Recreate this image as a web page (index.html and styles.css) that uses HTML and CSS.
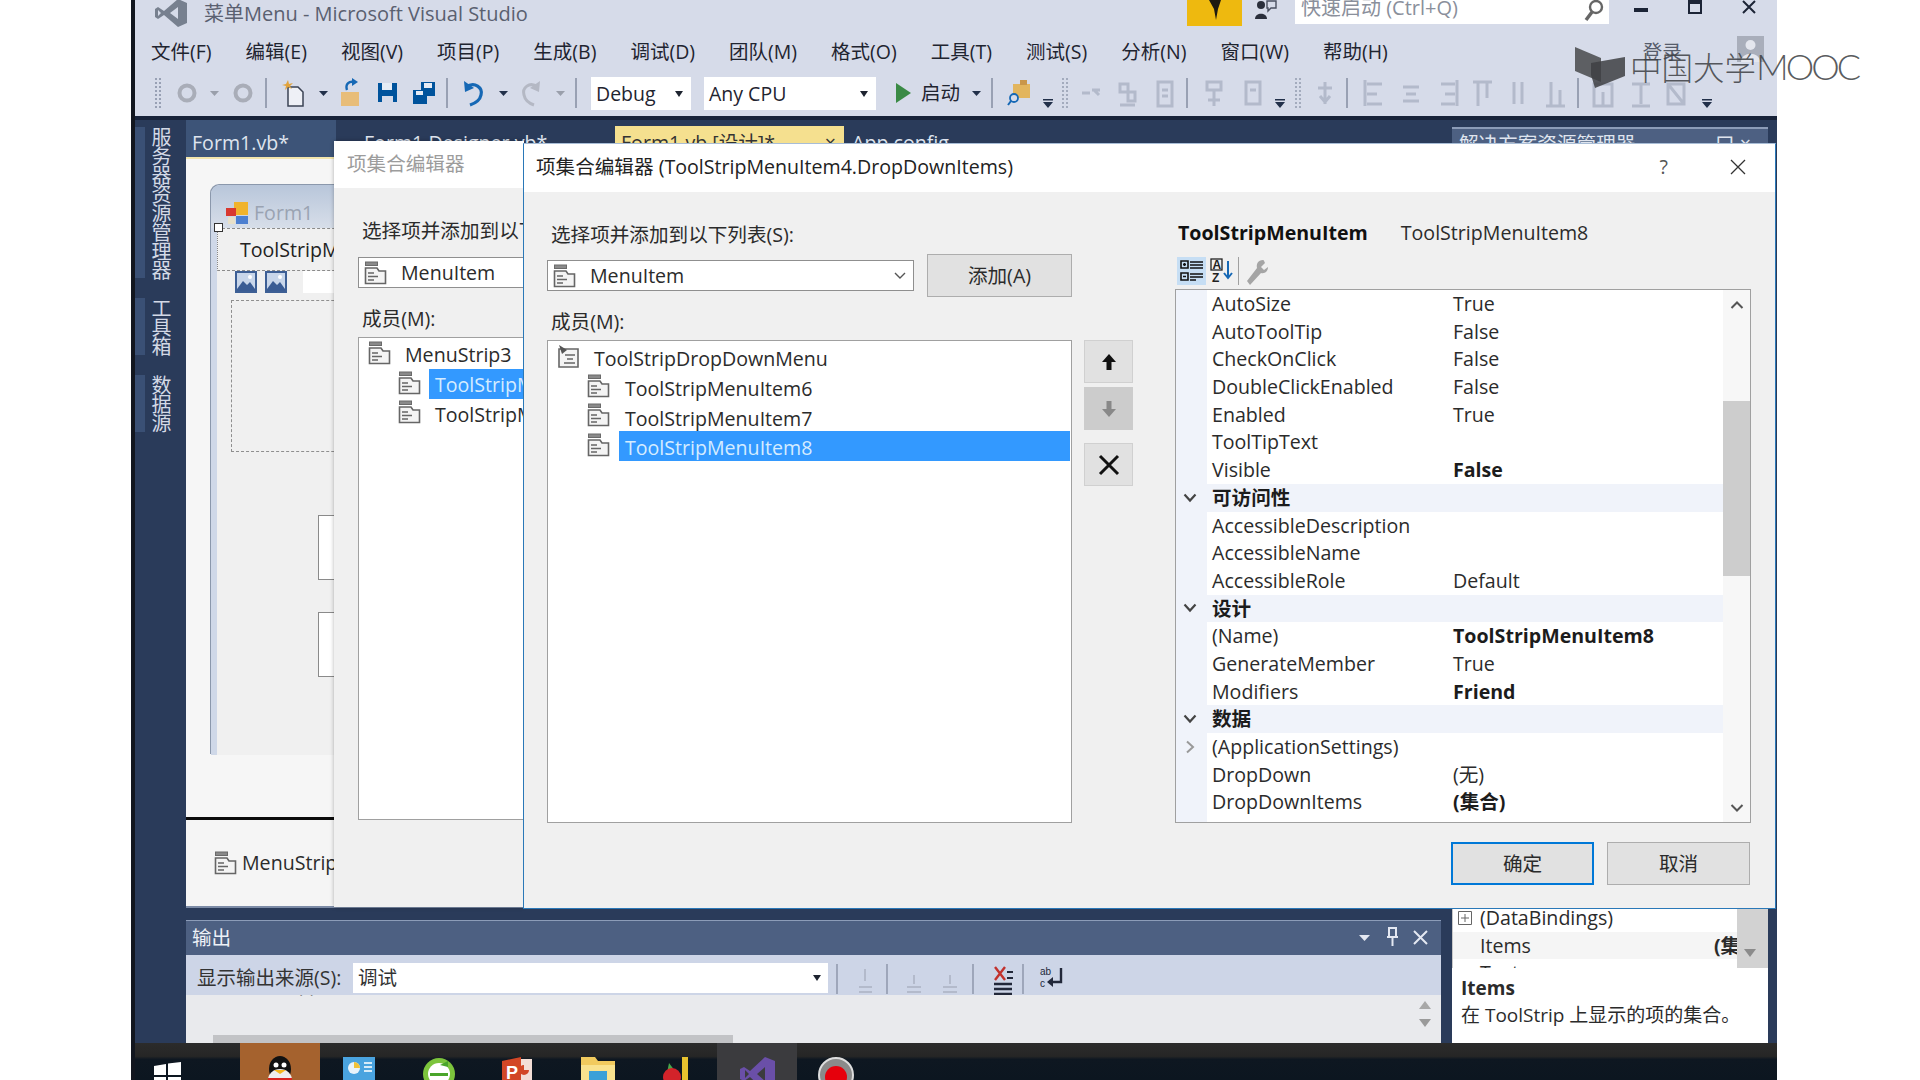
FILE: index.html
```html
<!DOCTYPE html>
<html lang="zh-CN">
<head>
<meta charset="utf-8">
<title>菜单Menu - Microsoft Visual Studio</title>
<link rel="stylesheet" href="styles.css">
</head>
<body>
<svg class="defs" width="0" height="0">
  <symbol id="comp" viewBox="0 0 23 24">
    <rect x="1.5" y="1" width="12" height="3.5" fill="#8a8a8a" stroke="#6a6a6a"/>
    <path d="M1.5 7H13l2 3h6.5v12.5h-20z" fill="#f4f4f4" stroke="#666" stroke-width="1.6"/>
    <path d="M4 12h6M4 15.5h10M4 19h6" stroke="#666" stroke-width="1.5"/>
  </symbol>
  <symbol id="compdrop" viewBox="0 0 23 24">
    <path d="M2 5h19v18H2z" fill="#f4f4f4" stroke="#666" stroke-width="1.6"/>
    <path d="M2 1l8 5-5 4z" fill="#555"/>
    <path d="M8 11h10M10 15h6M7 19h11" stroke="#666" stroke-width="1.5"/>
  </symbol>
  <symbol id="pic" viewBox="0 0 22 22">
    <rect width="22" height="22" fill="#3d5f95"/>
    <rect x="2" y="2" width="18" height="18" fill="#c8d6ea"/>
    <path d="M2 18l6-8 4 4 3-3 5 7v2H2z" fill="#3a5c94"/>
    <circle cx="15" cy="6" r="2" fill="#fff"/>
  </symbol>
</svg>
<div class="shell">
  <header class="titlebar">
    <svg class="vslogo" width="36" height="28" viewBox="0 0 36 28"><path d="M25 0l9 4v20l-9 4-14-12-6 4-3-2V10l3-2 6 4zM25 8l-8 6 8 6zM5 11v6l3-3z" fill="#77808f"/></svg>
    <span class="apptitle">菜单Menu - Microsoft Visual Studio</span>
    <span class="flag"><svg width="20" height="26" viewBox="0 0 20 26"><path d="M4 0h12l-3 9-2 11-2-11z" fill="#1e1a10"/></svg></span>
    <svg class="feedback" width="24" height="20" viewBox="0 0 24 20"><circle cx="7" cy="5" r="4" fill="#2a2f3c"/><path d="M1 19c0-7 12-7 12 0z" fill="#2a2f3c"/><path d="M13 1h9v7h-5l-3 3V8h-1z" fill="none" stroke="#4a5060" stroke-width="1.4"/></svg>
    <div class="quick">
      <span>快速启动 (Ctrl+Q)</span>
      <svg width="20" height="22" viewBox="0 0 20 22"><circle cx="12" cy="7" r="6" fill="none" stroke="#666" stroke-width="2.4"/><path d="M8 12l-6 8" stroke="#666" stroke-width="3.4"/></svg>
    </div>
    <div class="winbtns">
      <svg width="14" height="14" viewBox="0 0 14 14"><rect y="8" width="14" height="4" fill="#1c2436"/></svg>
      <svg width="14" height="16" viewBox="0 0 14 16"><rect x="1" y="0" width="12" height="13" fill="none" stroke="#1c2436" stroke-width="2"/><rect x="1" y="0" width="12" height="4" fill="#1c2436"/></svg>
      <svg width="14" height="14" viewBox="0 0 14 14"><path d="M1 1l12 12M13 1L1 13" stroke="#1c2436" stroke-width="2"/></svg>
    </div>
  </header>

  <nav class="menubar">
    <span>文件(F)</span><span>编辑(E)</span><span>视图(V)</span><span>项目(P)</span><span>生成(B)</span><span>调试(D)</span><span>团队(M)</span><span>格式(O)</span><span>工具(T)</span><span>测试(S)</span><span>分析(N)</span><span>窗口(W)</span><span>帮助(H)</span>
    <span class="login">登录</span>
    <svg class="userpic" width="27" height="26" viewBox="0 0 27 26"><rect width="27" height="26" fill="#a9aebb"/><circle cx="13.5" cy="9" r="5" fill="#e4e6ee"/><path d="M4 26c0-11 19-11 19 0z" fill="#e4e6ee"/></svg>
  </nav>

  <div class="toolbar">
    <svg class="tb-left" width="436" height="36" viewBox="150 75 436 36">
      <path d="M156 78v30M160 78v30" stroke="#98a0b4" stroke-width="2" stroke-dasharray="2 2"/>
      <circle cx="187" cy="93" r="7.5" fill="none" stroke="#a9adb8" stroke-width="4"/>
      <path d="M210 91h9l-4.500 5z" fill="#9a9fab"/>
      <circle cx="243" cy="93" r="7.500" fill="none" stroke="#a9adb8" stroke-width="4"/>
      <path d="M266 78v30M447 78v30M576 78v30" stroke="#7f889c" stroke-width="1.400"/>
      <path d="M288 87h10l5 5v14h-15z" fill="#eef0f6" stroke="#3b4354" stroke-width="1.500"/>
      <path d="M286 84l2-4 1 4 4-1-3 3 2 3-4-2-3 3 1-4-4-1z" fill="#e2a33b"/>
      <path d="M319 91h9l-4.500 5z" fill="#22304a"/>
      <path d="M341 92h18v14h-18z" fill="#e8bd79"/>
      <path d="M347 90c-2-6 2-9 7-8" fill="none" stroke="#1668b5" stroke-width="2.400"/>
      <path d="M352 78l6 4-6 4z" fill="#1668b5"/>
      <path d="M378 83h19v19h-19z" fill="#00539c"/>
      <path d="M382 83h10v7h-10z" fill="#e6ecf5"/>
      <path d="M382 96h11v6h-11z" fill="#d6dbe9"/>
      <path d="M413 90h14v14h-14z" fill="#00539c"/>
      <path d="M421 82h14v14h-8v-6h-6z" fill="#00539c"/>
      <path d="M424 83h8v5h-8zM416 91h7v4h-7z" fill="#e6ecf5"/>
      <path d="M466 87c9-6 17 1 15 8-1 5-5 8-11 10" fill="none" stroke="#1668b5" stroke-width="3.200"/>
      <path d="M464 81l1 11 9-4z" fill="#1668b5"/>
      <path d="M499 91h9l-4.500 5z" fill="#22304a"/>
      <path d="M538 87c-9-6-16 1-14 8 1 5 4 8 10 10" fill="none" stroke="#b4b8c4" stroke-width="3"/>
      <path d="M540 81l-1 11-9-4z" fill="#b4b8c4"/>
      <path d="M556 91h9l-4.500 5z" fill="#9a9fab"/>
    </svg>
    <div class="tcombo debug"><span>Debug</span><i></i></div>
    <div class="tcombo anycpu"><span>Any CPU</span><i></i></div>
    <svg class="play" width="15" height="20" viewBox="0 0 15 20"><path d="M0 0l15 10L0 20z" fill="#3a8a45"/></svg>
    <span class="start">启动</span>
    <svg class="tb-right" width="748" height="42" viewBox="970 72 748 42">
      <path d="M972 91h9l-4.500 5z" fill="#22304a"/>
      <path d="M992 78v30M1187 78v30M1347 78v30M1578 78v30" stroke="#7f889c" stroke-width="1.400"/>
      <path d="M1013 84h17v14h-17z" fill="#e2b55e"/><path d="M1020 80h7v5h-7z" fill="#c9964a"/>
      <circle cx="1014" cy="98" r="4" fill="#d6dbe9" stroke="#1668b5" stroke-width="1.800"/><path d="M1011 101l-3 4" stroke="#1668b5" stroke-width="2"/>
      <g class="ovf" fill="#22304a">
        <path d="M1043 99h10v1.500h-10zM1043 102h10l-5 6z"/>
        <path d="M1275 99h10v1.500h-10zM1275 102h10l-5 6z"/>
        <path d="M1702 99h10v1.500h-10zM1702 102h10l-5 6z"/>
      </g>
      <path d="M1063 78v30M1067 78v30M1296 78v30M1300 78v30" stroke="#a3abbd" stroke-width="2" stroke-dasharray="2 2"/>
      <g fill="none" stroke="#b3bacb" stroke-width="3">
        <path d="M1082 93h8M1092 90h8M1094 90l5 5"/>
        <path d="M1120 84h8v8h-8zM1128 92h7v9h-7zM1120 105h15"/>
        <path d="M1158 82h14v24h-14zM1162 90h6M1162 96h6"/>
        <path d="M1207 82h14v8h-14zM1214 90v16M1208 100h12"/>
        <path d="M1246 82h14v22h-14zM1250 90h6"/>
        <path d="M1318 88h14M1325 82v22M1320 96l5 6 5-6"/>
        <path d="M1367 84h15M1367 94h10M1367 104h15M1365 80v26"/>
        <path d="M1403 87h16M1406 94h10M1403 101h16"/>
        <path d="M1441 84h14M1445 94h10M1441 104h14M1457 80v26"/>
        <path d="M1473 82h19M1478 82v24M1487 82v16"/>
        <path d="M1514 82v22M1522 82v22"/>
        <path d="M1546 106h19M1551 82v24M1560 90v16"/>
        <path d="M1594 84h18v22h-18zM1603 92v14"/>
        <path d="M1632 84h18M1641 84v20M1632 106h18"/>
        <path d="M1668 84h16v20h-16zM1668 84l16 20"/>
      </g>
    </svg>
  </div>

  <main class="workspace">
    <aside class="sidebar">
      <div class="vtab tall"><i></i><span>服务器资源管理器</span></div>
      <div class="vtab"><i></i><span>工具箱</span></div>
      <div class="vtab"><i></i><span>数据源</span></div>
    </aside>

    <section class="centre">
      <div class="doctabs">
        <span class="dtab active">Form1.vb*</span>
        <span class="dtab plain">Form1.Designer.vb*</span>
        <span class="dtab yellow"><span>Form1.vb [设计]*</span><em>×</em></span>
        <span class="dtab plain">App.config</span>
      </div>
      <div class="designer">
        <div class="form">
          <div class="formtitle">
            <svg width="22" height="22" viewBox="0 0 22 22"><rect x="8" y="0" width="14" height="13" fill="#f0b32c"/><rect x="0" y="6" width="10" height="8" fill="#d8382f"/><rect x="2" y="15" width="7" height="7" fill="#e8e0c8"/><rect x="10" y="14" width="12" height="8" fill="#4c7fd0"/></svg>
            <span>Form1</span>
            <i class="handle"></i>
          </div>
          <div class="menustrip">ToolStripMenuItem4</div>
          <div class="picrow">
            <svg width="22" height="22"><use href="#pic"/></svg>
            <svg width="22" height="22"><use href="#pic"/></svg>
            <b></b>
          </div>
          <div class="formpanel"></div>
          <i class="formbtn one"></i>
          <i class="formbtn two"></i>
        </div>
      </div>
      <div class="tray">
        <svg width="23" height="24"><use href="#comp"/></svg>
        <span>MenuStrip3</span>
      </div>
      <div class="output">
        <div class="outhead">
          <span>输出</span>
          <svg width="78" height="24" viewBox="0 0 78 24">
            <path d="M0 9h11l-5.500 6z" fill="#e4e8f2"/>
            <path d="M30 2h7v9h-7zM28 11h11M33.500 11v9" fill="none" stroke="#e4e8f2" stroke-width="2"/>
            <path d="M55 5l13 13M68 5L55 18" stroke="#e4e8f2" stroke-width="2"/>
          </svg>
        </div>
        <div class="outbar">
          <label>显示输出来源(S):</label>
          <div class="outcombo"><span>调试</span><i></i></div>
          <svg width="236" height="34" viewBox="832 963 236 34">
            <path d="M838 965v30M888 965v30M974 965v30M1024 965v30" stroke="#8b93a8" stroke-width="1.400"/>
            <path d="M860 988h13M866 970v12M860 993h13M915 976v9M908 988h14M908 993h14M951 976v9M944 988h14M944 993h14" stroke="#b3bacb" stroke-width="2" fill="none"/>
            <path d="M995 985h18M995 990h18M995 995h18" stroke="#22283a" stroke-width="2.400"/>
            <path d="M996 968l10 13M1006 968l-10 13" stroke="#c2322d" stroke-width="2.400"/>
            <path d="M1008 973h6M1008 979h6" stroke="#22283a" stroke-width="2"/>
            <path d="M1062 969v14h-11" fill="none" stroke="#22283a" stroke-width="2.400"/><path d="M1054 978l-6 5 6 5z" fill="#22283a"/>
            <text x="1041" y="976" class="abc">ab</text><text x="1041" y="988" class="abc">c</text>
          </svg>
        </div>
        <div class="outbody">
          <p>“WindowsApplication1.vshost.exe”(CLR v4.0.30319: 已加载“调试”)</p>
          <div class="hscroll"><i></i></div>
          <i class="sarrow up"></i><i class="sarrow down"></i>
        </div>
      </div>
    </section>

    <aside class="rightcol">
      <div class="solution">
        <div class="solhead">
          <span>解决方案资源管理器</span>
          <em>- 口 ×</em>
        </div>
      </div>
      <div class="props">
        <div class="propmini">
          <div class="miniinner">
            <div class="mrow"><svg width="14" height="14" viewBox="0 0 14 14"><path d="M.5.500h13v13H.5zM3 7h8M7 3v8" fill="none" stroke="#666"/></svg><span>(DataBindings)</span></div>
            <div class="mrow tint"><span>Items</span><b>(集合)</b></div>
            <div class="mrow"><span>Text</span></div>
          </div>
          <div class="minitrack"><svg width="12" height="8" viewBox="0 0 12 8"><path d="M0 0h12L6 8z" fill="#8b8b8b"/></svg></div>
        </div>
        <div class="help">
          <b>Items</b>
          <p>在 ToolStrip 上显示的项的集合。</p>
        </div>
      </div>
    </aside>
  </main>

  <footer class="taskbar">
    <div class="startbtn"><svg width="27" height="27" viewBox="0 0 27 27"><path d="M0 4l12-2v11H0zM14 1.500L27 0v13H14zM0 15h12v11L0 24zM14 15h13v12l-13-2z" fill="#fff"/></svg></div>
    <div class="tile qq"><svg width="30" height="34" viewBox="0 0 30 34"><ellipse cx="15" cy="13" rx="11" ry="13" fill="#111"/><ellipse cx="15" cy="24" rx="12" ry="11" fill="#eee"/><path d="M3 22h24v6H3z" fill="#d8241f"/><circle cx="11" cy="9" r="2.500" fill="#fff"/><circle cx="19" cy="9" r="2.500" fill="#fff"/><path d="M9 14h12l-6 4z" fill="#f5b71e"/></svg></div>
    <div class="tile"><svg width="32" height="26" viewBox="0 0 32 26"><rect width="32" height="26" fill="#4aa3df"/><circle cx="11" cy="11" r="6" fill="#e9f3fb"/><path d="M11 11V5a6 6 0 0 1 6 6z" fill="#f0c23a"/><path d="M21 6h8M21 10h8M21 14h8" stroke="#d7ebf8" stroke-width="2"/></svg></div>
    <div class="tile"><svg width="34" height="34" viewBox="0 0 34 34"><circle cx="17" cy="17" r="16" fill="#7cc43c"/><circle cx="17" cy="17" r="11" fill="#fff"/><path d="M8 16h18v3H8zM26 4l-8 4 8 2z" fill="#4aa52a"/></svg></div>
    <div class="tile"><svg width="32" height="30" viewBox="0 0 32 30"><path d="M14 2h16v26H14z" fill="#f3ded6"/><path d="M0 4l19-4v30L0 28z" fill="#d24726"/><text x="4" y="22" class="ppt">P</text><path d="M22 8a5 5 0 1 0 5 5h-5z" fill="#d24726"/></svg></div>
    <div class="tile"><svg width="34" height="30" viewBox="0 0 34 30"><path d="M0 0h14l3 4h17v26H0z" fill="#f1ca5e"/><rect x="0" y="8" width="34" height="22" fill="#f9e28e"/><rect x="8" y="14" width="18" height="12" fill="#3aa0d8"/></svg></div>
    <div class="tile"><svg width="36" height="34" viewBox="0 0 36 34"><path d="M23 0h6v24h-6z" fill="#e8c22e"/><path d="M10 6l6 8-8 2z" fill="#49a64a"/><circle cx="13" cy="20" r="9" fill="#d3232a"/><rect x="0" y="26" width="36" height="8" fill="#7a93c9"/></svg></div>
    <div class="tile vs"><svg width="36" height="34" viewBox="0 0 36 34"><path d="M26 0l10 4v26l-10 4-15-14-6 4-4-2V12l4-2 6 4zM26 10l-8 7 8 7zM6 13v8l4-4z" fill="#6a4fa8"/></svg></div>
    <div class="tile"><svg width="36" height="36" viewBox="0 0 36 36"><circle cx="18" cy="18" r="17" fill="#8a8a8a" stroke="#ddd" stroke-width="2"/><circle cx="18" cy="20" r="11" fill="#e6000c"/></svg></div>
  </footer>
</div>

<div class="watermark">
  <svg width="52" height="42" viewBox="0 0 52 42"><path d="M0 0l26 11v24L0 24z" fill="#5d5f63"/><path d="M16 16l34-6v19L20 41l-4-13z" fill="#3e4043" opacity=".85"/></svg>
  <span>中国大学<em>MOOC</em></span>
</div>

<section class="dialog back">
  <div class="dtitle faded">项集合编辑器</div>
  <div class="backbody">
    <div class="lbl first">选择项并添加到以下列表(S):</div>
    <div class="combo wide"><svg width="23" height="24"><use href="#comp"/></svg><span>MenuItem</span></div>
    <div class="lbl second">成员(M):</div>
    <div class="list backlist">
      <div class="item root"><svg width="23" height="24"><use href="#comp"/></svg><span>MenuStrip3</span></div>
      <div class="item child"><svg width="23" height="24"><use href="#comp"/></svg><span class="sel">ToolStripMenuItem4</span></div>
      <div class="item child"><svg width="23" height="24"><use href="#comp"/></svg><span>ToolStripMenuItem5</span></div>
    </div>
  </div>
</section>

<section class="dialog front">
  <div class="dtitle">
    <span>项集合编辑器 (ToolStripMenuItem4.DropDownItems)</span>
    <span class="help-q">?</span>
    <svg class="dclose" width="16" height="16" viewBox="0 0 16 16"><path d="M1 1l14 14M15 1L1 15" stroke="#333" stroke-width="1.300"/></svg>
  </div>
  <div class="dcols">
    <div class="dleft">
      <div class="lbl first">选择项并添加到以下列表(S):</div>
      <div class="addrow">
        <div class="combo"><svg width="23" height="24"><use href="#comp"/></svg><span>MenuItem</span><svg class="chev" width="12" height="8" viewBox="0 0 12 8"><path d="M1 1l5 5 5-5" fill="none" stroke="#555" stroke-width="1.400"/></svg></div>
        <button class="btn add">添加(A)</button>
      </div>
      <div class="lbl second">成员(M):</div>
      <div class="list">
        <div class="item root"><svg width="23" height="24"><use href="#compdrop"/></svg><span>ToolStripDropDownMenu</span></div>
        <div class="item child"><svg width="23" height="24"><use href="#comp"/></svg><span>ToolStripMenuItem6</span></div>
        <div class="item child"><svg width="23" height="24"><use href="#comp"/></svg><span>ToolStripMenuItem7</span></div>
        <div class="item child current"><svg width="23" height="24"><use href="#comp"/></svg><span class="sel grow">ToolStripMenuItem8</span></div>
      </div>
    </div>
    <div class="dmove">
      <button class="mv"><svg width="14" height="16" viewBox="0 0 14 16"><path d="M7 0l7 8H9.500v8h-5V8H0z" fill="#111"/></svg></button>
      <button class="mv off"><svg width="14" height="16" viewBox="0 0 14 16"><path d="M7 16L0 8h4.500V0h5v8H14z" fill="#888"/></svg></button>
      <button class="mv del"><svg width="22" height="22" viewBox="0 0 22 22"><path d="M2 2l18 18M20 2L2 20" stroke="#111" stroke-width="3"/></svg></button>
    </div>
    <div class="dright">
      <div class="phead"><b>ToolStripMenuItem</b><span>ToolStripMenuItem8</span></div>
      <div class="ptools">
        <span class="ptool on"><svg width="24" height="24" viewBox="0 0 24 24"><path d="M1 2h7v7H1zM1 14h7v7H1z" fill="none" stroke="#111" stroke-width="1.600"/><path d="M3 5.500h3M3 17.500h3M4.500 4v3M10 3h13M10 6h13M10 9h13M10 15h13M10 18h13M10 21h6" stroke="#111" stroke-width="1.600"/></svg></span>
        <span class="ptool az-tool"><svg width="24" height="26" viewBox="0 0 24 26"><rect x="1" y="1" width="11" height="11" fill="none" stroke="#222" stroke-width="1.300"/><text x="2.500" y="10.500" class="az">A</text><text x="2" y="24" class="az">Z</text><path d="M18 3v16M14 15l4 5 4-5" fill="none" stroke="#1668b5" stroke-width="2"/></svg></span>
        <i class="psep"></i>
        <span class="ptool"><svg width="24" height="28" viewBox="0 0 24 28"><path d="M18 1c-5 0-7 4-6 8L2 22l3 4 11-12c4 1 7-2 7-6l-4 3-3-3 4-4c-1-2-1-3-2-3z" fill="#a5a5a5"/></svg></span>
      </div>
      <div class="pgrid">
        <div class="prows">
          <div class="prow"><s></s><span>AutoSize</span><span>True</span></div>
          <div class="prow"><s></s><span>AutoToolTip</span><span>False</span></div>
          <div class="prow"><s></s><span>CheckOnClick</span><span>False</span></div>
          <div class="prow"><s></s><span>DoubleClickEnabled</span><span>False</span></div>
          <div class="prow"><s></s><span>Enabled</span><span>True</span></div>
          <div class="prow"><s></s><span>ToolTipText</span><span></span></div>
          <div class="prow"><s></s><span>Visible</span><b>False</b></div>
          <div class="prow cat"><s><svg width="14" height="10" viewBox="0 0 14 10"><path d="M1.500 1.500L7 7.500l5.500-6" fill="none" stroke="#444" stroke-width="2.200"/></svg></s><b>可访问性</b><span></span></div>
          <div class="prow"><s></s><span>AccessibleDescription</span><span></span></div>
          <div class="prow"><s></s><span>AccessibleName</span><span></span></div>
          <div class="prow"><s></s><span>AccessibleRole</span><span>Default</span></div>
          <div class="prow cat"><s><svg width="14" height="10" viewBox="0 0 14 10"><path d="M1.500 1.500L7 7.500l5.500-6" fill="none" stroke="#444" stroke-width="2.200"/></svg></s><b>设计</b><span></span></div>
          <div class="prow"><s></s><span>(Name)</span><b>ToolStripMenuItem8</b></div>
          <div class="prow"><s></s><span>GenerateMember</span><span>True</span></div>
          <div class="prow"><s></s><span>Modifiers</span><b>Friend</b></div>
          <div class="prow cat"><s><svg width="14" height="10" viewBox="0 0 14 10"><path d="M1.500 1.500L7 7.500l5.500-6" fill="none" stroke="#444" stroke-width="2.200"/></svg></s><b>数据</b><span></span></div>
          <div class="prow"><s><svg width="10" height="14" viewBox="0 0 10 14"><path d="M2 1.500L8 7l-6 5.500" fill="none" stroke="#999" stroke-width="2"/></svg></s><span>(ApplicationSettings)</span><span></span></div>
          <div class="prow"><s></s><span>DropDown</span><span>(无)</span></div>
          <div class="prow"><s></s><span>DropDownItems</span><b>(集合)</b></div>
          <div class="prow"><s></s><span>Text</span><span></span></div>
        </div>
        <div class="ptrack">
          <svg width="14" height="10" viewBox="0 0 14 10"><path d="M1.500 8L7 2.500 12.500 8" fill="none" stroke="#555" stroke-width="2"/></svg>
          <i class="thumb"></i>
          <svg class="tdown" width="14" height="10" viewBox="0 0 14 10"><path d="M1.500 2L7 7.500 12.500 2" fill="none" stroke="#555" stroke-width="2"/></svg>
        </div>
      </div>
    </div>
  </div>
  <div class="dfoot">
    <button class="btn ok">确定</button>
    <button class="btn">取消</button>
  </div>
</section>
</body>
</html>
```

FILE: styles.css
```css
* { box-sizing: border-box; }
html, body { margin: 0; padding: 0; height: 1080px; overflow: hidden; background: #fff; }
body {
  position: relative;
  width: 1920px;
  font-family: "Open Sans", "Noto Sans CJK SC", sans-serif;
  font-size: 19.6px;
  line-height: 24px;
  color: #2b2b2b;
}
svg { display: block; flex: none; }
i, s, em { font-style: normal; text-decoration: none; }
p { margin: 0; }
button { font: inherit; color: inherit; padding: 0; }
.defs { position: absolute; }

.shell {
  width: 1646px;
  height: 1080px;
  margin-left: 131px;
  border-left: 4px solid #12161f;
  display: flex;
  flex-direction: column;
  background: #d6dbe9;
  overflow: hidden;
}

/* title bar */
.titlebar { height: 38px; display: flex; align-items: flex-start; flex: none; color: #555c6c; padding-right: 21px; }
.vslogo { margin-left: 18px; margin-top: -1px; }
.apptitle { margin-left: 15px; margin-top: 2px; font-size: 20px; flex: 1; color: #5a6070; }
.flag { width: 55px; height: 26px; background: #eeb90f; display: flex; justify-content: center; }
.feedback { margin: 0 17px 0 12px; }
.quick {
  width: 314px; height: 24px; background: #fff; display: flex; justify-content: space-between;
  padding: 0 5px 0 6px; color: #8a8f9b; font-size: 20px; line-height: 16px;
}
.winbtns { display: flex; gap: 40px; margin-left: 25px; margin-top: 0; align-items: flex-start; }

/* menu */
.menubar { height: 28px; flex: none; display: flex; gap: 34px; padding-left: 16px; font-size: 19.5px; line-height: 28px; color: #1f2430; align-items: center; }
.menubar span { white-space: nowrap; }
.login { margin-left: 221px; color: #565c6b; }
.userpic { margin-left: 21px; margin-top: -6px; }

/* toolbar */
.toolbar { height: 50px; flex: none; padding-top: 4px; display: flex; align-items: flex-start; padding-left: 15px; }
.tb-left { margin-top: 5px; }
.tb-right { margin-left: 0; margin-top: 2px; }
.tcombo { height: 33px; margin-top: 7px; background: #fff; display: flex; align-items: center; justify-content: space-between; padding: 0 8px 0 5px; font-size: 19.5px; color: #1f2430; }
.tcombo i, .outcombo i { width: 0; height: 0; border: 4.5px solid transparent; border-top: 6px solid #1e2430; border-bottom: 0; }
.debug { width: 100px; margin-left: 5px; }
.anycpu { width: 172px; margin-left: 13px; }
.play { margin: 13px 0 0 20px; }
.start { margin: 11px 8px 0 10px; font-size: 19.5px; color: #1f2430; width: 41px; white-space: nowrap; }

/* workspace */
.workspace { flex: 1; display: flex; background: #2a3b5a; border-top: 4px solid #18233a; min-height: 0; }
.sidebar { width: 51px; flex: none; padding-top: 7px; display: flex; flex-direction: column; gap: 20px; }
.vtab { display: flex; height: 57px; }
.vtab.tall { height: 151px; }
.vtab i { width: 10px; background: #3a5075; }
.vtab span { writing-mode: vertical-rl; font-size: 20px; line-height: 20px; letter-spacing: -1px; margin-left: 5px; color: #d3d9e6; white-space: nowrap; }

.centre { width: 1255px; flex: none; display: flex; flex-direction: column; }
.doctabs { height: 37px; flex: none; display: flex; align-items: flex-end; color: #dfe4ee; }
.dtab { height: 37px; line-height: 44px; padding-left: 6px; white-space: nowrap; overflow: hidden; }
.dtab.active { width: 150px; background: #3d5478; line-height: 46px; }
.dtab.plain { width: 251px; padding-left: 28px; line-height: 46px; }
.dtab.plain:last-child { width: 200px; padding-left: 8px; }
.dtab.yellow { width: 229px; height: 31px; background: #f5e08f; color: #333; line-height: 34px; display: flex; justify-content: space-between; padding-right: 8px; }
.dtab.active + .dtab.plain { width: 279px; }

.designer { height: 663px; flex: none; background: #f6f6f6; border-top: 2px solid #f3e6ad; padding: 26px 0 0 25px; overflow: hidden; border-bottom: 3px solid #0c0c0c; }
.form { position: relative; width: 1000px; height: 570px; background: #f0f0f0; border-left: 6px solid #cfd8e8; border-radius: 9px 0 0 0; box-shadow: -1px -1px 0 #8b98ac; }
.formtitle { height: 43px; margin-left: -6px; border-radius: 9px 0 0 0; background: linear-gradient(#b8c6da, #d7dee9); display: flex; align-items: center; padding: 12px 0 0 15px; gap: 6px; color: #9aa3b2; position: relative; }
.handle { position: absolute; left: 3px; top: 38px; width: 9px; height: 9px; background: #fff; border: 1px solid #333; }
.menustrip { height: 43px; line-height: 41px; padding-left: 22px; border: 1px dashed #8b8b8b; border-left: 1px dotted #888; white-space: nowrap; color: #222; }
.picrow { display: flex; height: 22px; padding-left: 18px; gap: 8px; }
.picrow b { flex: 1; background: #fff; margin-left: 8px; }
.formpanel { width: 900px; height: 152px; margin: 7px 0 0 14px; border: 1px dashed #8f8f8f; }
.formbtn { position: absolute; left: 101px; width: 100px; height: 65px; background: #fff; border: 1px solid #8a8a8a; }
.formbtn.one { top: 330px; }
.formbtn.two { top: 427px; }
.tray { height: 88px; flex: none; background: #f5f5f5; border-bottom: 2px solid #7c8ba6; display: flex; align-items: center; gap: 5px; padding: 0 0 0 28px; color: #2b2b2b; }
.output { margin-top: 12px; flex: 1; display: flex; flex-direction: column; min-height: 0; }
.outhead { height: 35px; flex: none; background: #4d6082; border-top: 1px solid #8c9cb8; color: #eef1f7; padding-left: 6px; display: flex; align-items: center; justify-content: space-between; padding-right: 4px; }
.outbar { height: 40px; flex: none; background: #cdd5e7; display: flex; align-items: flex-start; padding: 8px 0 0 11px; font-size: 19.5px; color: #333; }
.outbar label { width: 156px; white-space: nowrap; padding-top: 3px; }
.outcombo { width: 475px; height: 30px; background: #fff; display: flex; align-items: center; justify-content: space-between; padding: 0 7px 0 5px; }
.outcombo + svg { margin-left: 3px; margin-top: -1px; }
.abc { font: 10px "Liberation Sans", sans-serif; fill: #22283a; }
.az { font: bold 12px "Liberation Sans", sans-serif; fill: #222; }
.outbody { flex: 1; background: #e9eaed; position: relative; overflow: hidden; }
.outbody p { font-size: 17px; margin: -21px 0 0 24px; white-space: nowrap; color: #888; }
.hscroll { position: absolute; left: 27px; right: 0; bottom: 0; height: 8px; }
.hscroll i { display: block; width: 520px; height: 8px; background: #c2c3c6; }
.sarrow { position: absolute; left: 1233px; width: 0; height: 0; border: 6px solid transparent; }
.sarrow.up { top: 6px; border-bottom: 8px solid #a8a8a8; border-top: 0; }
.sarrow.down { top: 24px; border-top: 8px solid #9a9a9a; border-bottom: 0; }

.rightcol { width: 316px; margin-left: 11px; flex: none; display: flex; flex-direction: column; }
.solution { height: 789px; flex: none; padding-top: 7px; }
.solhead { height: 40px; background: #4d6082; border-top: 2px solid #8c9cb8; padding: 0 7px; display: flex; justify-content: space-between; color: #dfe4ee; line-height: 30px; white-space: nowrap; }
.solhead em { margin-right: 10px; }
.props { flex: 1; background: #fff; display: flex; flex-direction: column; min-height: 0; }
.propmini { height: 59px; flex: none; display: flex; overflow: hidden; background: #f5f5f5; border-left: 1px solid #c8c8c8; }
.miniinner { flex: 1; min-width: 0; overflow: hidden; margin-top: -5px; height: 64px; }
.mrow { height: 27.7px; display: flex; align-items: center; padding-left: 27px; position: relative; white-space: nowrap; background: #fff; }
.mrow svg { position: absolute; left: 5px; top: 7px; }
.mrow.tint { background: #f5f5f5; }
.mrow b { margin-left: 183px; }
.minitrack { width: 31px; flex: none; background: #d2d2d2; padding: 40px 0 0 7px; }
.help { flex: 1; padding: 7px 0 0 9px; line-height: 27px; font-size: 19px; }

/* taskbar */
.taskbar { height: 37px; flex: none; margin-left: -4px; padding-left: 0; display: flex; background: linear-gradient(#2b2b2b 0, #262626 36%, #0e1721 44%, #0c1620 100%); overflow: hidden; }
.startbtn { width: 109px; padding: 19px 0 0 23px; height: 46px; }
.tile { width: 79.500px; height: 50px; display: flex; justify-content: center; padding-top: 14px; flex: none; }
.qq { background: #a5622e; padding-top: 13px; }
.vs { background: #3b3b3e; }
.ppt { font: bold 18px "Liberation Sans", sans-serif; fill: #fff; }

/* watermark */
.watermark { position: absolute; left: 1575px; top: 46px; display: flex; align-items: flex-start; gap: 3px; color: rgba(60, 62, 66, .85); z-index: 5; pointer-events: none; }
.watermark svg { margin-top: 1px; }
.watermark span { font-size: 31.500px; font-weight: 300; line-height: 40px; margin-top: 0; white-space: nowrap; }
.watermark em { font-family: "Lato", sans-serif; font-weight: 300; font-size: 36px; letter-spacing: -3px; }

/* dialogs */
.dialog { position: absolute; background: #f0f0f0; overflow: hidden; }
.back { left: 334px; top: 141px; width: 190px; height: 766px; box-shadow: 0 0 4px rgba(0, 0, 0, .3); }
.front { left: 523px; top: 143px; width: 1253px; height: 766px; border: 1px solid #2a78b8; border-top-color: #a8bdd6; }
.dtitle { height: 47px; background: #fff; padding: 0 0 2px 12px; display: flex; align-items: center; white-space: nowrap; color: #222; }
.dtitle.faded { color: #9c9c9c; padding-left: 13px; }
.front .dtitle { height: 48px; }
.front .dtitle > span:first-child { flex: 1; }
.help-q { margin-right: 62px; color: #555; }
.dclose { margin-right: 29px; }
.backbody { padding-left: 24px; white-space: nowrap; }
.lbl { padding-left: 4px; height: 24px; white-space: nowrap; color: #2b2b2b; }
.backbody .lbl.first { margin-top: 31px; }
.backbody .lbl.second { margin-top: 19px; }
.combo { height: 31px; width: 367px; background: #fff; border: 1px solid #8f8f8f; display: flex; align-items: center; padding-left: 5px; position: relative; }
.combo span { margin-left: 14px; }
.backbody .combo { margin-top: 14px; width: 400px; }
.chev { position: absolute; right: 7px; top: 11px; }
.list { background: #fff; border: 1px solid #a0a0a0; height: 483px; margin-top: 6px; overflow: hidden; padding-top: 1px; }
.backlist { width: 400px; }
.item { height: 29.800px; display: flex; align-items: flex-start; white-space: nowrap; }
.item svg { align-self: center; transform: translateY(-1px); }
.item span { line-height: 33px; height: 29.800px; }
.backlist .item span { line-height: 32px; }
.item.root { padding-left: 9px; }
.item.root span { margin-left: 14px; }
.item.child { padding-left: 39px; }
.item.child span { margin-left: 9px; padding: 0 0 0 6px; }
.list .item.child span.sel { background: #3399ff; color: #d5ecff; }
.list .grow { flex: 1; margin-right: 1px; }
.backlist .item.child { padding-left: 39px; }
.backlist .item.child span { margin-left: 8px; }
.backlist .item.root { padding-left: 9px; }

.dcols { display: flex; padding-left: 23px; }
.dleft { width: 525px; flex: none; padding-top: 31px; }
.dleft .lbl.second { margin-top: 13px; }
.addrow { display: flex; align-items: center; justify-content: space-between; height: 43px; margin-top: 7px; }
.btn { background: #e1e1e1; border: 1px solid #adadad; width: 143px; height: 43px; }
.btn.add { width: 145px; }
.btn.ok { border: 2px solid #0078d7; }
.dmove { width: 49px; margin-left: 12px; flex: none; padding-top: 148px; display: flex; flex-direction: column; }
.mv { width: 49px; height: 43px; background: #e1e1e1; border: 1px solid #d0d0d0; display: flex; align-items: center; justify-content: center; }
.mv.off { margin-top: 4px; background: #cccccc; border-color: #cccccc; }
.mv.del { margin-top: 13px; }
.dright { width: 576px; margin-left: 42px; flex: none; padding-top: 29px; }
.phead { display: flex; gap: 33px; height: 24px; padding-left: 3px; white-space: nowrap; }
.phead b { font-weight: 700; color: #111; }
.ptools { display: flex; align-items: center; height: 28px; margin-top: 12px; padding-left: 2px; gap: 3px; }
.ptool { display: block; width: 29px; height: 28px; padding: 2px 3px; }
.ptool.az-tool { width: 26px; padding: 1px 0 0 1px; }
.ptool.on { background: #c6def4; }
.psep { width: 1px; height: 28px; background: #a0a0a0; }
.pgrid { margin-top: 4px; height: 534px; background: #fff; border: 1px solid #a0a0a0; display: flex; overflow: hidden; }
.prows { flex: 1; min-width: 0; padding-top: 0; background: #fff; overflow: hidden; }
.prow { height: 27.700px; display: grid; grid-template-columns: 31px 246px 1fr; line-height: 27.700px; white-space: nowrap; }
.prow > *:nth-child(2) { padding-left: 5px; }
.prow s { background: #f0f3fa; display: flex; align-items: center; justify-content: center; padding-right: 3px; }
.prow.cat { background: #f0f3fa; }
.prow b { font-weight: 700; color: #1c1c1c; }
.ptrack { width: 27px; flex: none; background: #f7f7f7; display: flex; flex-direction: column; align-items: center; padding-top: 10px; margin-right: 0; }
.thumb { display: block; width: 27px; height: 175px; background: #cdcdcd; margin-top: 91px; }
.tdown { margin-top: auto; margin-bottom: 9px; }
.dfoot { display: flex; justify-content: flex-end; gap: 13px; padding-right: 25px; margin-top: 19px; }
```
